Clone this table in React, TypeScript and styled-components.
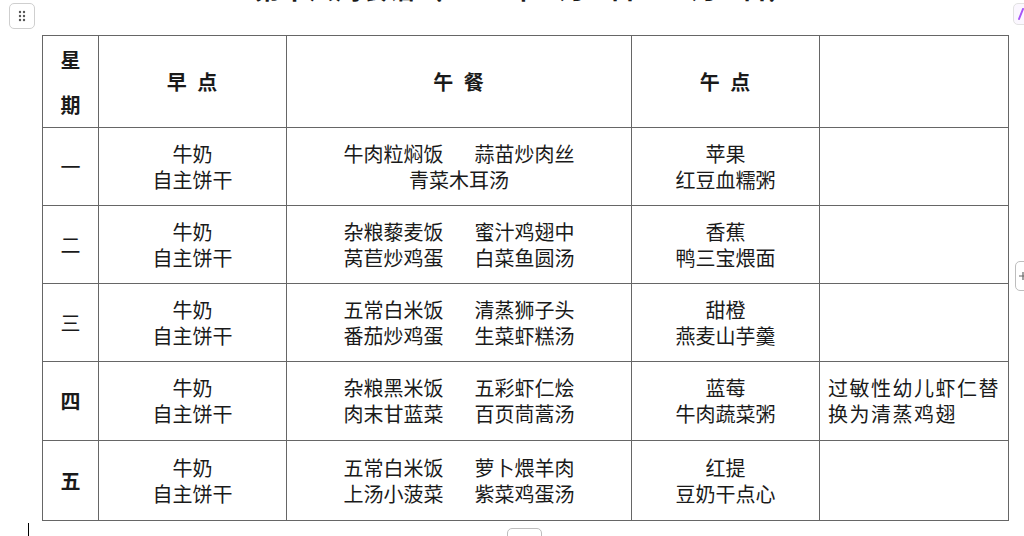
import React from "react";
import styled, { createGlobalStyle } from "styled-components";

const Global = createGlobalStyle`
  html, body { margin: 0; padding: 0; background: #fff; overflow: hidden; }
  body { font-family: "Noto Sans CJK SC", "Liberation Serif", serif; color: #1a1a1a; }
`;

const Page = styled.div`
  position: relative;
  width: 1024px;
  height: 536px;
  overflow: hidden;
  padding: 0 0 0 42px;
  box-sizing: border-box;
`;

const Title = styled.h1`
  margin: -26px 0 0 0;
  height: 28px;
  width: 966px;
  text-align: center;
  font-size: 26px;
  font-weight: 700;
  line-height: 28px;
  letter-spacing: 1px;
  white-space: nowrap;
`;

const Table = styled.table`
  margin-top: 33px;
  border-collapse: collapse;
  width: 966px;
  table-layout: fixed;
  font-size: 20px;
`;

const Cell = styled.td<{ $bold?: boolean; $left?: boolean }>`
  border: 1px solid #666;
  padding: 0;
  text-align: ${(p) => (p.$left ? "left" : "center")};
  vertical-align: middle;
  font-weight: ${(p) => (p.$bold ? 700 : 400)};
  line-height: 26px;
`;

const Row = styled.tr<{ $h: number }>`
  height: ${(p) => p.$h}px;
`;

const HeadText = styled.span`
  font-weight: 700;
  letter-spacing: 1px;
  word-spacing: 4px;
`;

const Week = styled.div`
  display: flex;
  flex-direction: column;
  align-items: center;
  line-height: 45px;
  font-weight: 700;
`;

const Lines = styled.div`
  display: flex;
  flex-direction: column;
  align-items: center;
`;

const DishLine = styled.div`
  display: flex;
  justify-content: center;
  gap: 31px;
`;

const Note = styled.div`
  padding: 0 2px 0 8px;
  letter-spacing: 1.5px;
  line-height: 26px;
`;

const Handle = styled.div`
  position: absolute;
  left: 9px;
  top: 3px;
  width: 24px;
  height: 24px;
  border: 1px solid #cfcfcf;
  border-radius: 5px;
  background: #fff;
  display: flex;
  align-items: center;
  justify-content: center;
`;

const CornerBtn = styled.div`
  position: absolute;
  left: 1013px;
  top: 3px;
  width: 24px;
  height: 22px;
  border: 1px solid #e2e2e2;
  border-radius: 5px;
  background: #fbf7ff;
  display: flex;
  align-items: center;
  padding-left: 4px;
  box-sizing: border-box;
`;

const SideBtn = styled.div`
  position: absolute;
  left: 1015px;
  top: 261px;
  width: 20px;
  height: 30px;
  border: 1px solid #bdbdbd;
  border-radius: 5px;
  background: #fff;
  display: flex;
  align-items: center;
  justify-content: flex-start;
  padding-left: 2px;
  box-sizing: border-box;
`;

const BottomBtn = styled.div`
  position: absolute;
  left: 507px;
  top: 528px;
  width: 33px;
  height: 20px;
  border: 1px solid #bdbdbd;
  border-radius: 5px;
  background: #fff;
`;

const Caret = styled.div`
  position: absolute;
  left: 28px;
  top: 523px;
  width: 1px;
  height: 14px;
  background: #000;
`;

type Day = {
  label: string;
  bold?: boolean;
  breakfast: string[];
  lunch: string[][];
  snack: string[];
  note?: string;
  h: number;
};

const days: Day[] = [
  { label: "一", breakfast: ["牛奶", "自主饼干"], lunch: [["牛肉粒焖饭", "蒜苗炒肉丝"], ["青菜木耳汤"]], snack: ["苹果", "红豆血糯粥"], h: 78 },
  { label: "二", breakfast: ["牛奶", "自主饼干"], lunch: [["杂粮藜麦饭", "蜜汁鸡翅中"], ["莴苣炒鸡蛋", "白菜鱼圆汤"]], snack: ["香蕉", "鸭三宝煨面"], h: 78 },
  { label: "三", breakfast: ["牛奶", "自主饼干"], lunch: [["五常白米饭", "清蒸狮子头"], ["番茄炒鸡蛋", "生菜虾糕汤"]], snack: ["甜橙", "燕麦山芋羹"], h: 78 },
  { label: "四", bold: true, breakfast: ["牛奶", "自主饼干"], lunch: [["杂粮黑米饭", "五彩虾仁烩"], ["肉末甘蓝菜", "百页茼蒿汤"]], snack: ["蓝莓", "牛肉蔬菜粥"], note: "过敏性幼儿虾仁替换为清蒸鸡翅", h: 79 },
  { label: "五", bold: true, breakfast: ["牛奶", "自主饼干"], lunch: [["五常白米饭", "萝卜煨羊肉"], ["上汤小菠菜", "紫菜鸡蛋汤"]], snack: ["红提", "豆奶干点心"], h: 80 },
];

export default function App() {
  return (
    <Page>
      <Global />
      <Title>第十六周食谱（2024年 6月 3日 — 6月 7日）</Title>
      <Table>
        <colgroup>
          <col style={{ width: 56 }} />
          <col style={{ width: 188 }} />
          <col style={{ width: 345 }} />
          <col style={{ width: 188 }} />
          <col style={{ width: 189 }} />
        </colgroup>
        <tbody>
          <Row $h={92}>
            <Cell>
              <Week>
                <span>星</span>
                <span>期</span>
              </Week>
            </Cell>
            <Cell><HeadText>早 点</HeadText></Cell>
            <Cell><HeadText>午 餐</HeadText></Cell>
            <Cell><HeadText>午 点</HeadText></Cell>
            <Cell />
          </Row>
          {days.map((d) => (
            <Row key={d.label} $h={d.h}>
              <Cell $bold={d.bold}>{d.label}</Cell>
              <Cell>
                <Lines>
                  {d.breakfast.map((t) => (
                    <div key={t}>{t}</div>
                  ))}
                </Lines>
              </Cell>
              <Cell>
                <Lines>
                  {d.lunch.map((line, i) => (
                    <DishLine key={i}>
                      {line.map((t) => (
                        <span key={t}>{t}</span>
                      ))}
                    </DishLine>
                  ))}
                </Lines>
              </Cell>
              <Cell>
                <Lines>
                  {d.snack.map((t) => (
                    <div key={t}>{t}</div>
                  ))}
                </Lines>
              </Cell>
              <Cell $left>{d.note ? <Note>{d.note}</Note> : null}</Cell>
            </Row>
          ))}
        </tbody>
      </Table>
      <Handle>
        <svg width="10" height="12" viewBox="0 0 10 12">
          {[2, 6, 10].map((y) =>
            [3, 7].map((x) => <circle key={`${x}-${y}`} cx={x} cy={y} r="1.2" fill="#555" />)
          )}
        </svg>
      </Handle>
      <CornerBtn>
        <svg width="8" height="12" viewBox="0 0 8 12">
          <path d="M1 11 L5 1" stroke="#a855f7" strokeWidth="2" strokeLinecap="round" />
        </svg>
      </CornerBtn>
      <SideBtn>
        <svg width="10" height="10" viewBox="0 0 10 10">
          <path d="M1 5 H9 M5 1 V9" stroke="#666" strokeWidth="1.2" />
        </svg>
      </SideBtn>
      <BottomBtn />
      <Caret />
    </Page>
  );
}
